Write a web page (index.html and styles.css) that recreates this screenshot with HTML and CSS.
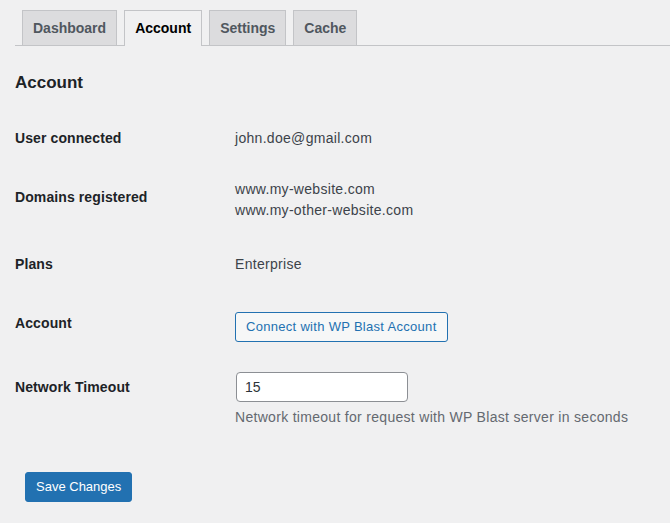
FILE: index.html
```html
<!DOCTYPE html>
<html>
<head>
<meta charset="utf-8">
<link rel="stylesheet" href="styles.css">
</head>
<body>
<div class="wrap">
  <nav class="tabs">
    <a class="tab">Dashboard</a>
    <a class="tab active">Account</a>
    <a class="tab">Settings</a>
    <a class="tab">Cache</a>
  </nav>
  <h2 class="title">Account</h2>
  <div class="form">
    <div class="row r1">
      <div class="th">User connected</div>
      <div class="td">john.doe@gmail.com</div>
    </div>
    <div class="row r2">
      <div class="th">Domains registered</div>
      <div class="td">www.my-website.com<br>www.my-other-website.com</div>
    </div>
    <div class="row r3">
      <div class="th">Plans</div>
      <div class="td">Enterprise</div>
    </div>
    <div class="row r4">
      <div class="th">Account</div>
      <div class="td"><button class="btn-secondary">Connect with WP Blast Account</button></div>
    </div>
    <div class="row r5">
      <div class="th">Network Timeout</div>
      <div class="td">
        <input class="input" type="text" value="15">
        <p class="desc">Network timeout for request with WP Blast server in seconds</p>
      </div>
    </div>
  </div>
  <div class="submit">
    <button class="btn-primary">Save Changes</button>
  </div>
</div>
</body>
</html>
```

FILE: styles.css
```css
html, body {
  margin: 0;
  padding: 0;
  background: #f0f0f1;
}
body {
  font-family: "Liberation Sans", Arial, sans-serif;
  font-size: 14px;
  color: #3c434a;
}
.wrap {
  padding: 10px 0 0 15px;
}
.tabs {
  display: flex;
  border-bottom: 1px solid #c3c4c7;
  height: 35px;
}
.tab {
  display: block;
  margin-left: 7px;
  padding: 5px 10px;
  border: 1px solid #c3c4c7;
  border-bottom: none;
  background: #dcdcde;
  color: #50575e;
  font-size: 14px;
  font-weight: bold;
  line-height: 24px;
  height: 24px;
  box-sizing: content-box;
}
.tab.active {
  background: #f0f0f1;
  color: #000;
  height: 25px;
}
.title {
  margin: 0;
  padding-top: 27px;
  font-size: 17px;
  line-height: 20px;
  font-weight: bold;
  color: #1d2327;
}
.form {
  margin-top: 15px;
}
.row {
  display: grid;
  grid-template-columns: 220px 1fr;
  align-items: start;
}
.th {
  font-weight: bold;
  color: #1d2327;
  line-height: 21px;
  padding-top: 20px;
  padding-bottom: 18px;
  letter-spacing: 0.1px;
}
.td {
  line-height: 21px;
  letter-spacing: 0.3px;
}
.r1 .td { padding-top: 20px; }
.r2 .td { padding-top: 12px; padding-bottom: 13px; }
.r3 .td { padding-top: 20px; }
.r4 .td { padding-top: 18.5px; padding-bottom: 15.5px; }
.r5 .td { padding-top: 14.5px; }
.btn-secondary {
  display: block;
  height: 30px;
  padding: 0 10px;
  border: 1px solid #2271b1;
  border-radius: 3px;
  background: #f6f7f7;
  color: #2271b1;
  font-family: inherit;
  font-size: 13px;
  letter-spacing: 0.3px;
  cursor: pointer;
}
.input {
  display: block;
  box-sizing: border-box;
  width: 172px;
  height: 30px;
  margin-left: 1px;
  padding: 0 8px;
  border: 1px solid #8c8f94;
  border-radius: 4px;
  background: #fff;
  color: #2c3338;
  font-family: inherit;
  font-size: 14px;
}
.desc {
  margin: 5px 0 0;
  color: #646970;
  line-height: 21px;
}
.submit {
  padding: 44px 0 0 10px;
}
.btn-primary {
  display: block;
  height: 30px;
  padding: 0 10px;
  border: 1px solid #2271b1;
  border-radius: 3px;
  background: #2271b1;
  color: #fff;
  font-family: inherit;
  font-size: 13px;
}
```
